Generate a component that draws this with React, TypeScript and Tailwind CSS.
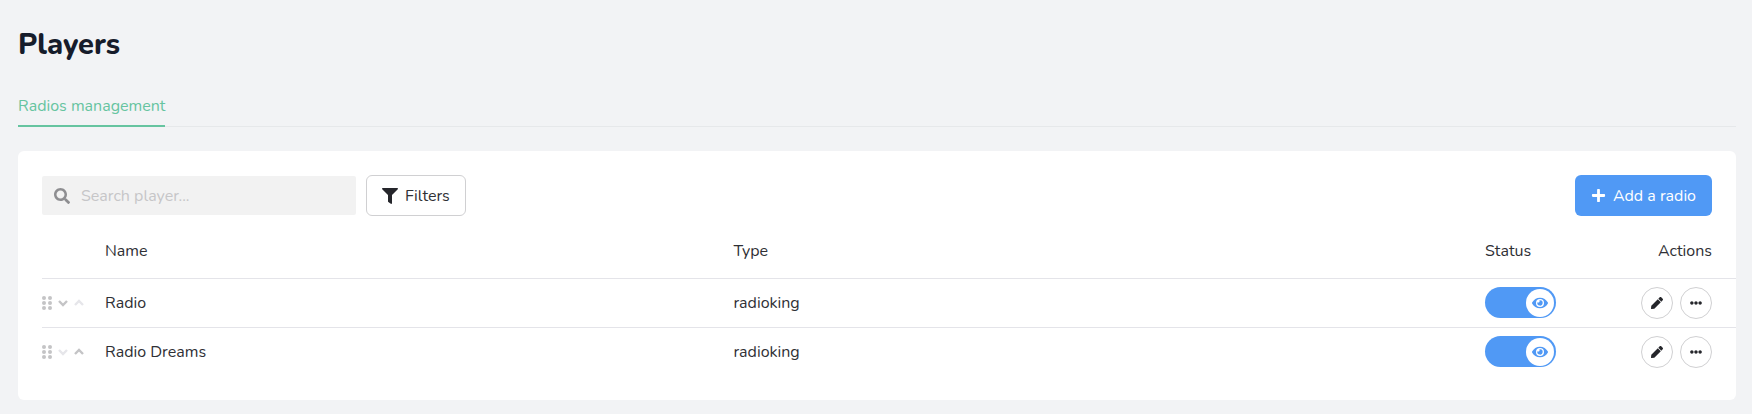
import { FaEllipsisH, FaEye, FaFilter, FaPen, FaPlus, FaSearch } from "react-icons/fa";

const radios = [
  { id: 1, name: "Radio", type: "radioking" },
  { id: 2, name: "Radio Dreams", type: "radioking" },
];

function DragHandle() {
  return (
    <svg viewBox="0 0 10 14" className="h-[14px] w-[10px] fill-[#c4c4c6]" aria-hidden="true">
      {[2, 7, 12].map((y) => (
        <g key={y}>
          <circle cx="2" cy={y} r="2" />
          <circle cx="8" cy={y} r="2" />
        </g>
      ))}
    </svg>
  );
}

function MoveButton({ label, path, disabled }: { label: string; path: string; disabled: boolean }) {
  return (
    <button
      type="button"
      aria-label={label}
      disabled={disabled}
      className={disabled ? "text-[#e6e6ea]" : "text-[#c4c4c6]"}
    >
      <svg viewBox="0 0 10 8" className="h-2 w-[10px]" fill="none" stroke="currentColor" strokeWidth="2.4">
        <path d={path} />
      </svg>
    </button>
  );
}

function Toggle({ label }: { label: string }) {
  return (
    <label className="flex h-[31px] w-[71px] cursor-pointer items-center justify-end rounded-full bg-[#5099f5] pr-0.5">
      <input type="checkbox" defaultChecked aria-label={label} className="sr-only" />
      <span className="flex size-7 items-center justify-center rounded-full bg-white text-[#5099f5]">
        <FaEye className="size-4" />
      </span>
    </label>
  );
}

function RoundButton({ label, children }: { label: string; children: React.ReactNode }) {
  return (
    <button
      type="button"
      aria-label={label}
      className="flex size-8 items-center justify-center rounded-full border border-[#d0d0d2] bg-white text-[#25262b]"
    >
      {children}
    </button>
  );
}

export default function App() {
  return (
    <main className="min-h-screen bg-[#f2f3f5] pt-[25px] pr-4 pb-3.5 pl-[18px] font-['Nunito','Lato',sans-serif] text-base text-[#2f3035]">
      <h1 className="text-[29px] leading-10 font-extrabold text-[#161c2b]">Players</h1>

      <nav className="mt-[23px] flex border-b border-[#e6e8ea]">
        <a
          href="#radios"
          className="-mb-px border-b-2 border-[#66c4a0] pt-1.5 pb-[7px] leading-6 text-[#66c4a0]"
        >
          Radios management
        </a>
      </nav>

      <section className="mt-6 rounded-md bg-white py-6 pl-6">
        <div className="flex items-center gap-2.5 pr-6">
          <label className="flex h-[39px] w-[314px] items-center gap-[11px] rounded-xs bg-[#f2f2f2] px-3">
            <FaSearch className="size-4 shrink-0 text-[#8e8e91]" />
            <input
              type="search"
              aria-label="Search player"
              placeholder="Search player..."
              className="w-full bg-transparent outline-none placeholder:text-[#c6c6c8]"
            />
          </label>
          <button
            type="button"
            className="flex h-[41px] items-center gap-[7px] rounded-md border border-[#d0d0d2] bg-white px-[15px]"
          >
            <FaFilter className="size-4 text-[#25262b]" />
            Filters
          </button>
          <button
            type="button"
            className="ml-auto flex h-[41px] items-center gap-[7px] rounded-md bg-[#5099f5] px-4 text-white"
          >
            <FaPlus className="size-[15px]" />
            Add a radio
          </button>
        </div>

        <table className="mt-2 w-full table-fixed text-left">
          <colgroup>
            <col className="w-[63px]" />
            <col className="w-[37.1%]" />
            <col />
            <col className="w-[120px]" />
            <col className="w-[131px]" />
          </colgroup>
          <thead>
            <tr className="h-[54px]">
              <th aria-label="Order" />
              <th className="font-normal">Name</th>
              <th className="font-normal">Type</th>
              <th className="font-normal">Status</th>
              <th className="pr-6 text-right font-normal">Actions</th>
            </tr>
          </thead>
          <tbody>
            {radios.map((radio, i) => (
              <tr key={radio.id} className="h-[49px] border-t border-[#e4e4e9]">
                <td>
                  <div className="flex items-center gap-1.5">
                    <DragHandle />
                    <MoveButton label="Move down" path="M1 2l4 4 4-4" disabled={i === radios.length - 1} />
                    <MoveButton label="Move up" path="M1 6l4-4 4 4" disabled={i === 0} />
                  </div>
                </td>
                <td>{radio.name}</td>
                <td>{radio.type}</td>
                <td>
                  <Toggle label={`${radio.name} visible`} />
                </td>
                <td className="pr-6">
                  <div className="flex justify-end gap-[7px]">
                    <RoundButton label="Edit">
                      <FaPen className="size-3" />
                    </RoundButton>
                    <RoundButton label="More">
                      <FaEllipsisH className="size-3" />
                    </RoundButton>
                  </div>
                </td>
              </tr>
            ))}
          </tbody>
        </table>
      </section>
    </main>
  );
}
